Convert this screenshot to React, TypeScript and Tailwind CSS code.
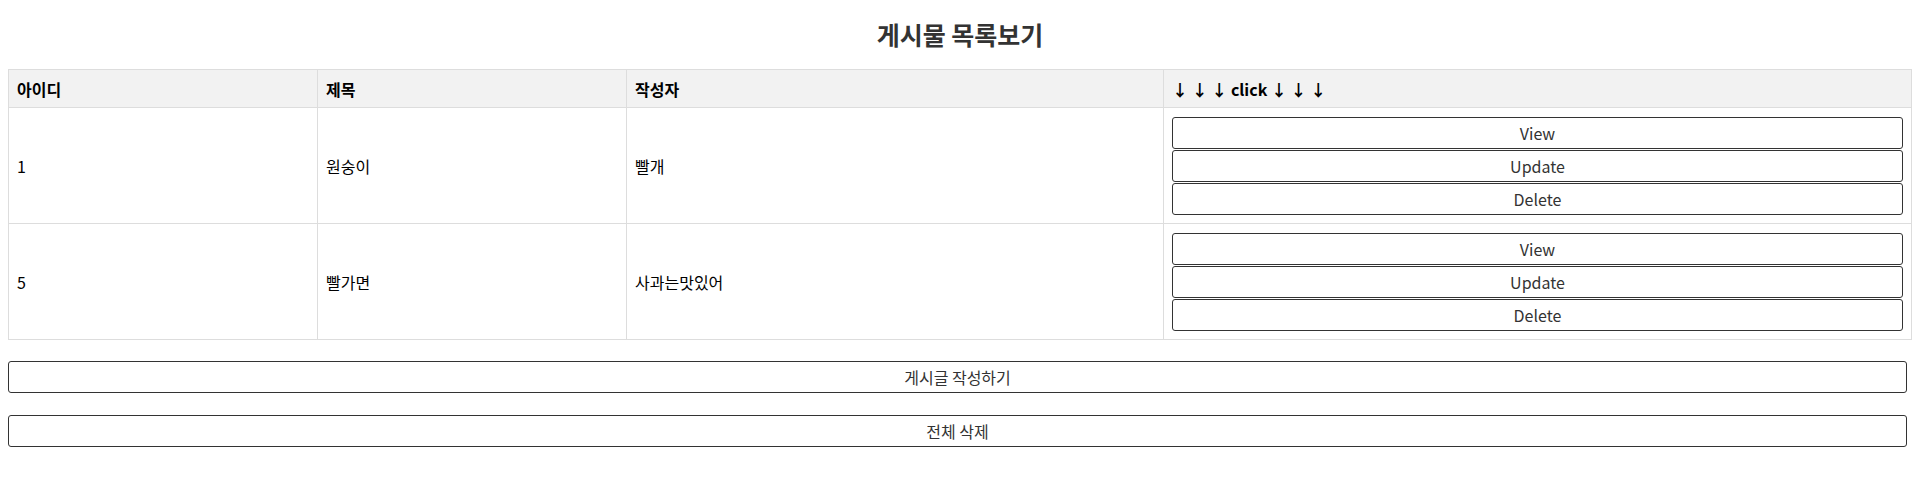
const posts = [
  { id: 1, title: "원숭이", writer: "빨개" },
  { id: 5, title: "빨가면", writer: "사과는맛있어" },
];

export default function App() {
  return (
    <div className="min-h-screen bg-white px-2 text-[16px] text-[#333] font-['Noto_Sans_CJK_KR','Noto_Sans',sans-serif]">
      <h2 className="mt-4 mb-[17px] h-9 text-center text-[25px] font-bold leading-9 text-[#333]">
        게시물 목록보기
      </h2>

      {/* Post table */}
      <table className="w-full table-fixed border-collapse border border-[#ddd]">
        <thead>
          <tr className="bg-[#f2f2f2] text-black">
            <th className="w-[309px] h-[38px] border border-[#ddd] px-2 text-left font-bold">아이디</th>
            <th className="w-[309px] border border-[#ddd] px-2 text-left font-bold">제목</th>
            <th className="w-[537px] border border-[#ddd] px-2 text-left font-bold">작성자</th>
            <th className="border border-[#ddd] px-2 text-left font-bold">↓ ↓ ↓ click ↓ ↓ ↓</th>
          </tr>
        </thead>
        <tbody>
          {posts.map((p) => (
            <tr key={p.id} className="text-black">
              <td className="border border-[#ddd] px-2 align-middle">{p.id}</td>
              <td className="border border-[#ddd] px-2 align-middle">{p.title}</td>
              <td className="border border-[#ddd] px-2 align-middle">{p.writer}</td>
              <td className="border border-[#ddd] px-2 pt-[9px] pb-2">
                <div className="flex flex-col gap-px">
                  <button className="h-8 w-full rounded-[3px] border border-[#333] bg-white text-[#333]">View</button>
                  <button className="h-8 w-full rounded-[3px] border border-[#333] bg-white text-[#333]">Update</button>
                  <button className="h-8 w-full rounded-[3px] border border-[#333] bg-white text-[#333]">Delete</button>
                </div>
              </td>
            </tr>
          ))}
        </tbody>
      </table>

      <div className="flex flex-col">
        <button className="mt-[21px] h-8 w-[1899px] rounded-[3px] border border-[#333] bg-white text-[#333]">
          게시글 작성하기
        </button>
        <button className="mt-[22px] h-8 w-[1899px] rounded-[3px] border border-[#333] bg-white text-[#333]">
          전체 삭제
        </button>
      </div>
    </div>
  );
}
